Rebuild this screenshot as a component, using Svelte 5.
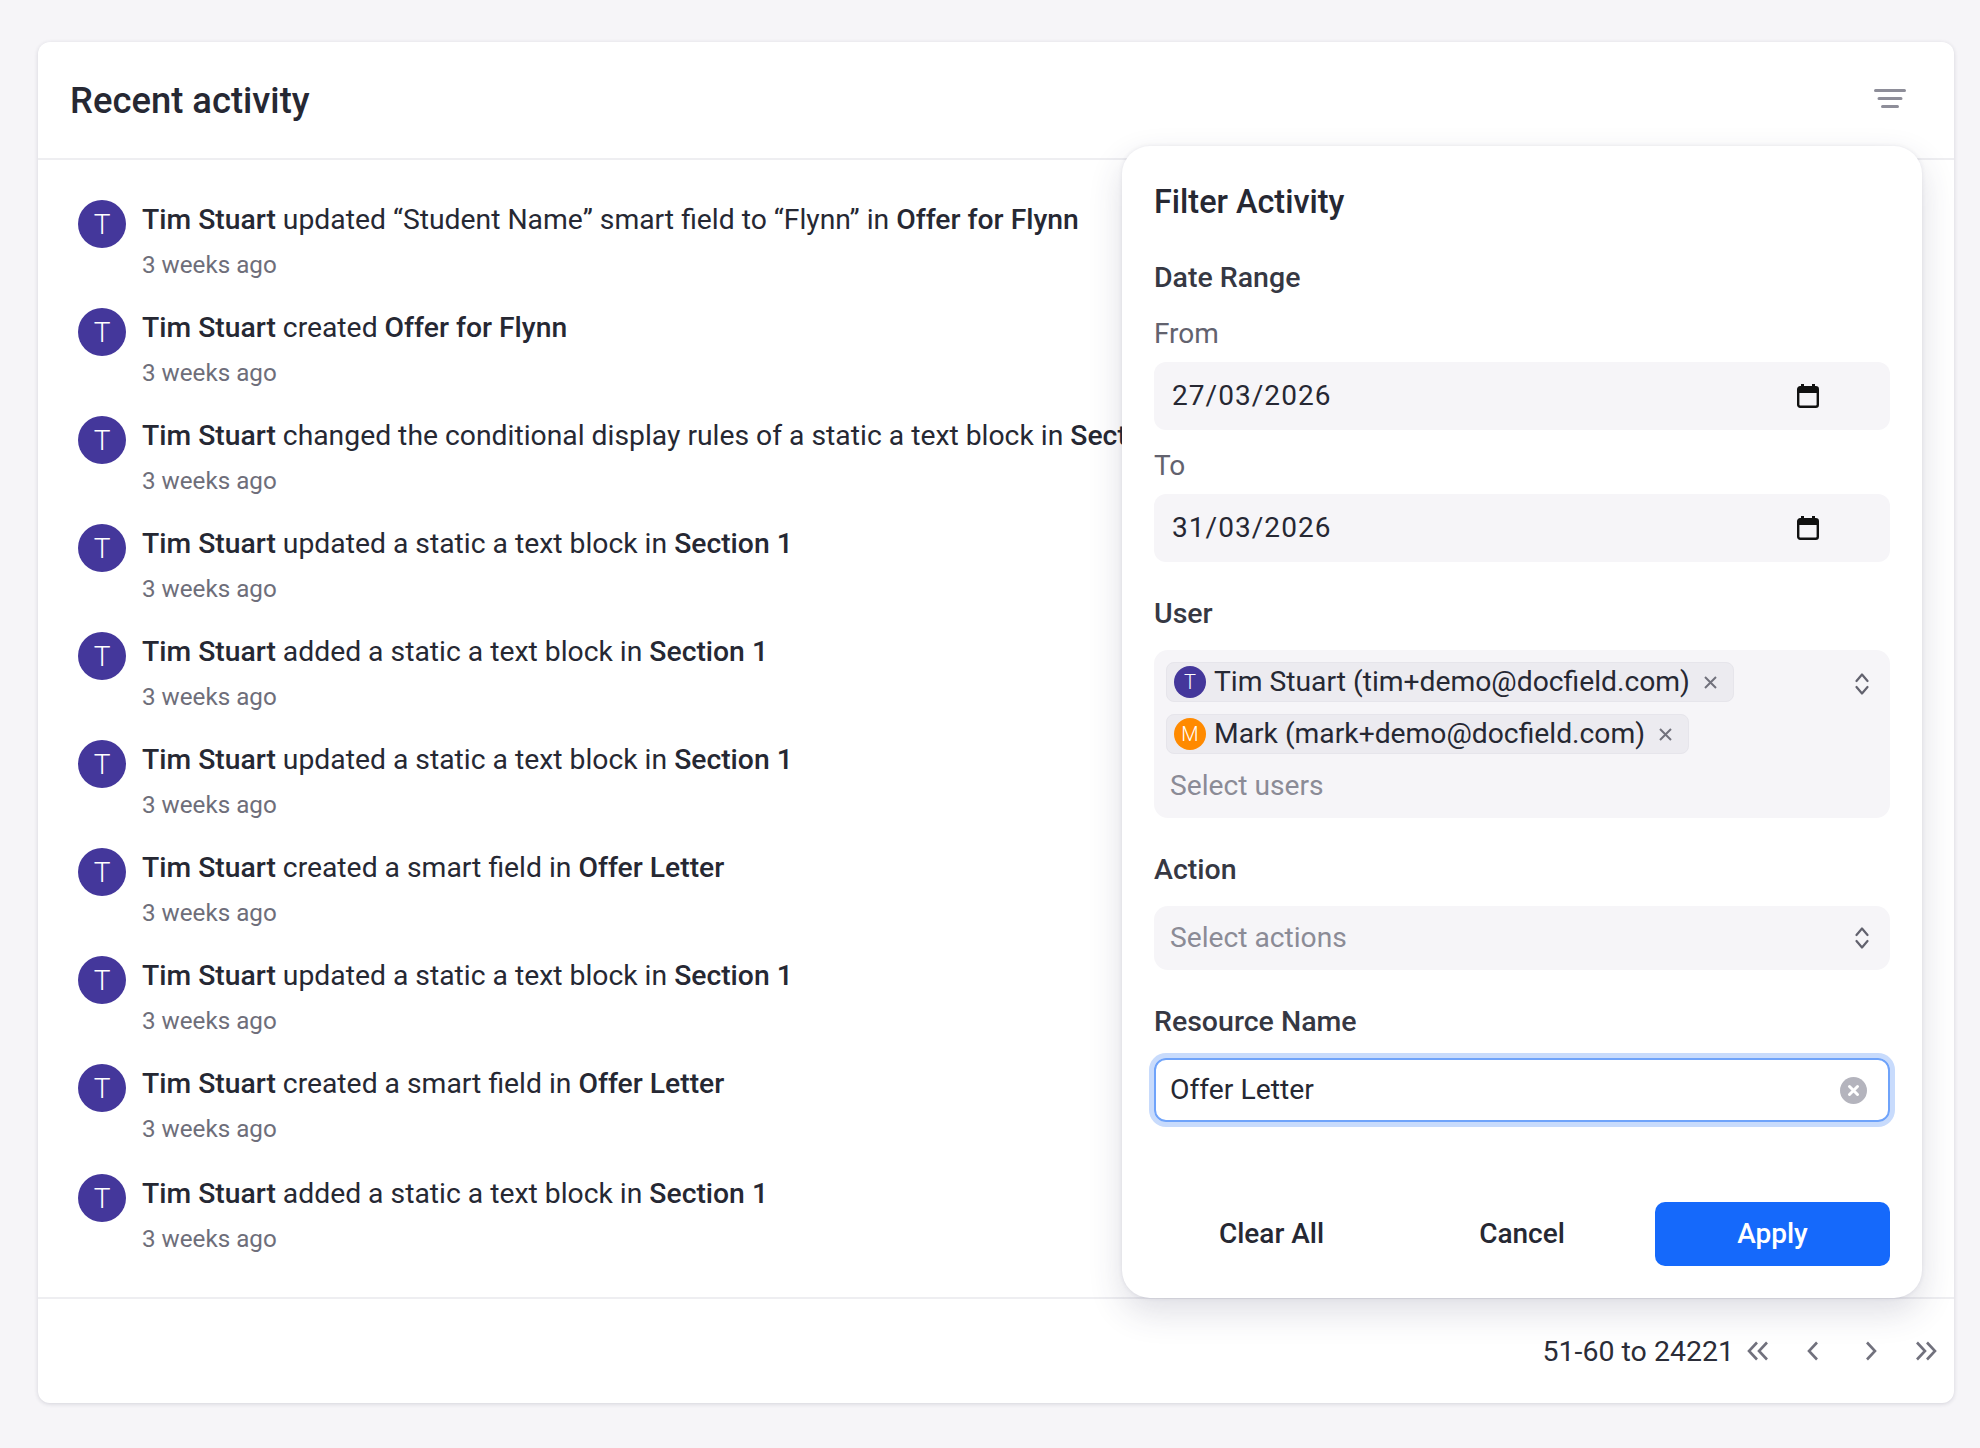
<script>
  const rows = [
    [' updated “Student Name” smart field to “Flynn” in ', 'Offer for Flynn'],
    [' created ', 'Offer for Flynn'],
    [' changed the conditional display rules of a static a text block in ', 'Section 1'],
    [' updated a static a text block in ', 'Section 1'],
    [' added a static a text block in ', 'Section 1'],
    [' updated a static a text block in ', 'Section 1'],
    [' created a smart field in ', 'Offer Letter'],
    [' updated a static a text block in ', 'Section 1'],
    [' created a smart field in ', 'Offer Letter'],
    [' added a static a text block in ', 'Section 1']
  ];
</script>

<div class="page">
  <div class="card">
    <header class="head">
      <h1>Recent activity</h1>
      <svg class="filter" width="32" height="19" viewBox="0 0 32 19" fill="none" stroke="#8e8e99" stroke-width="3" stroke-linecap="round">
        <path d="M1.5 1.5h29M5 9.5h22M8.5 17.5h15" />
      </svg>
    </header>
    <ul class="list">
      {#each rows as r}
        <li class="row">
          <span class="av">T</span>
          <div class="txt">
            <p class="line"><b>Tim Stuart</b>{r[0]}<b>{r[1]}</b></p>
            <p class="ago">3 weeks ago</p>
          </div>
        </li>
      {/each}
    </ul>
    <footer class="foot">
      <span class="count">51-60 to 24221</span>
      <svg class="pg first" width="22" height="20" viewBox="0 0 22 20" fill="none" stroke="#71717d" stroke-width="2.6"><path d="M10 1.5L2 10l8 8.5M20 1.5L12 10l8 8.5" /></svg>
      <svg class="pg prev" width="13" height="20" viewBox="0 0 13 20" fill="none" stroke="#71717d" stroke-width="2.6"><path d="M11 1.5L3 10l8 8.5" /></svg>
      <svg class="pg next" width="13" height="20" viewBox="0 0 13 20" fill="none" stroke="#71717d" stroke-width="2.6"><path d="M2 1.5L10 10l-8 8.5" /></svg>
      <svg class="pg last" width="22" height="20" viewBox="0 0 22 20" fill="none" stroke="#71717d" stroke-width="2.6"><path d="M2 1.5L10 10l-8 8.5M12 1.5l8 8.5-8 8.5" /></svg>
    </footer>

    <aside class="pop">
      <h2>Filter Activity</h2>
      <h3 class="dr">Date Range</h3>
      <div class="sub">From</div>
      <div class="date">
        <span>27/03/2026</span>
        <svg width="22" height="24" viewBox="0 0 22 24"><path d="M5.5 0v4M16.5 0v4" stroke="#111" stroke-width="3"/><rect x="1.2" y="3.2" width="19.6" height="19.6" rx="2" fill="none" stroke="#111" stroke-width="2.4"/><rect x="1" y="3" width="20" height="6" fill="#111"/></svg>
      </div>
      <div class="sub">To</div>
      <div class="date">
        <span>31/03/2026</span>
        <svg width="22" height="24" viewBox="0 0 22 24"><path d="M5.5 0v4M16.5 0v4" stroke="#111" stroke-width="3"/><rect x="1.2" y="3.2" width="19.6" height="19.6" rx="2" fill="none" stroke="#111" stroke-width="2.4"/><rect x="1" y="3" width="20" height="6" fill="#111"/></svg>
      </div>

      <h3 class="user">User</h3>
      <div class="multi">
        <div class="tags">
          <span class="tag"><span class="mini indigo">T</span>Tim Stuart (tim+demo@docfield.com)<svg class="x" width="13" height="13" viewBox="0 0 13 13" stroke="#71717c" stroke-width="2"><path d="M1 1l11 11M12 1L1 12"/></svg></span>
          <span class="tag"><span class="mini orange">M</span>Mark (mark+demo@docfield.com)<svg class="x" width="13" height="13" viewBox="0 0 13 13" stroke="#71717c" stroke-width="2"><path d="M1 1l11 11M12 1L1 12"/></svg></span>
          <span class="ph">Select users</span>
        </div>
        <svg class="updown" width="14" height="22" viewBox="0 0 14 22" fill="none" stroke="#62626e" stroke-width="2.2" stroke-linecap="round" stroke-linejoin="round"><path d="M1.5 8L7 1.5 12.5 8M1.5 14L7 20.5 12.5 14"/></svg>
      </div>

      <h3 class="action">Action</h3>
      <div class="select">
        <span class="ph">Select actions</span>
        <svg class="updown" width="14" height="22" viewBox="0 0 14 22" fill="none" stroke="#62626e" stroke-width="2.2" stroke-linecap="round" stroke-linejoin="round"><path d="M1.5 8L7 1.5 12.5 8M1.5 14L7 20.5 12.5 14"/></svg>
      </div>

      <h3 class="res">Resource Name</h3>
      <div class="input">
        <span>Offer Letter</span>
        <svg width="27" height="27" viewBox="0 0 27 27"><circle cx="13.5" cy="13.5" r="13.5" fill="#b4b4bd"/><path d="M9.5 9.5l8 8M17.5 9.5l-8 8" stroke="#fff" stroke-width="3" stroke-linecap="round"/></svg>
      </div>

      <div class="btns">
        <button class="ghost">Clear All</button>
        <button class="ghost">Cancel</button>
        <button class="apply">Apply</button>
      </div>
    </aside>
  </div>
</div>

<style>
  :global(body) { margin: 0; background: #f6f5f8; }
  .page { height: 1448px; padding: 42px 26px 0 38px; box-sizing: border-box; font-family: Roboto, sans-serif; color: #262833; }
  .card { position: relative; height: 1361px; background: #fff; border-radius: 12px; box-shadow: 0 1px 4px rgba(40,40,70,.16); display: flex; flex-direction: column; }
  .head { height: 118px; flex: none; box-sizing: border-box; border-bottom: 2px solid #eeeef1; display: flex; align-items: center; justify-content: space-between; padding: 0 48px 0 32px; }
  h1 { margin: 0; font-size: 36.4px; font-weight: 500; }
  .filter { margin-bottom: 4px; }
  .list { list-style: none; margin: 0; padding: 34px 0 0 40px; flex: 1; overflow: hidden; }
  .row { display: flex; height: 108px; gap: 16px; }
  .row:last-child { margin-top: 2px; }
  .av { flex: none; width: 48px; height: 48px; border-radius: 50%; background: #44379b; color: #fff; font-size: 28px; font-weight: 300; display: flex; align-items: center; justify-content: center; margin-top: 6px; }
  .txt { min-width: 0; white-space: nowrap; padding-top: 6px; }
  .line { margin: 0; font-size: 28.3px; line-height: 40px; }
  .line b { font-weight: 500; }
  .ago { margin: 8px 0 0; font-size: 24.2px; line-height: 34px; color: #6e6e7a; }
  .foot { height: 106px; flex: none; box-sizing: border-box; border-top: 2px solid #eeeef1; display: flex; align-items: center; justify-content: flex-end; padding: 0 17px 0 0; }
  .count { font-size: 28.5px; margin-right: 13px; color: #2b2d38; }
  .pg { flex: none; }
  .prev { margin-left: 37px; }
  .next { margin-left: 46px; }
  .last { margin-left: 37px; }

  .pop { position: absolute; left: 1084px; top: 104px; width: 800px; height: 1152px; box-sizing: border-box; padding: 34px 32px 32px; background: #fff; border-radius: 28px; box-shadow: 0 14px 34px rgba(50,50,90,.16), 0 0 4px rgba(50,50,90,.1); display: flex; flex-direction: column; }
  h2 { margin: 0; font-size: 32.4px; line-height: 44px; font-weight: 500; }
  h3 { margin: 0; font-size: 28.5px; line-height: 40px; font-weight: 500; color: #363843; }
  .dr { margin-top: 34px; }
  .sub { font-size: 28px; line-height: 40px; color: #62626e; margin-top: 16px; }
  .date { height: 68px; margin-top: 8px; box-sizing: border-box; padding: 0 71px 1px 18px; background: #f6f5f8; border-radius: 12px; display: flex; align-items: center; justify-content: space-between; font-size: 28px; letter-spacing: 1.05px; }
  .user { margin-top: 32px; }
  .multi { margin-top: 16px; background: #f6f5f8; border-radius: 14px; height: 168px; box-sizing: border-box; padding: 12px 21px 0 12px; display: flex; justify-content: space-between; }
  .tags { display: flex; flex-direction: column; align-items: flex-start; gap: 12px; }
  .tag { height: 40px; box-sizing: border-box; display: inline-flex; align-items: center; background: #ecebf0; border: 1px solid #e6e5eb; border-radius: 8px; padding: 0 16px 0 7px; font-size: 28.25px; line-height: 38px; }
  .mini { width: 32px; height: 32px; border-radius: 50%; color: #fff; font-size: 20px; font-weight: 300; display: flex; align-items: center; justify-content: center; margin-right: 8px; }
  .indigo { background: #44379b; }
  .orange { background: #ff8a00; }
  .x { margin-left: 14px; }
  .ph { font-size: 28.2px; line-height: 40px; color: #8b8b96; padding-left: 4px; }
  .multi .updown { margin-top: 11px; }
  .action { margin-top: 32px; }
  .select { margin-top: 16px; height: 64px; background: #f6f5f8; border-radius: 14px; display: flex; align-items: center; justify-content: space-between; padding: 0 21px 0 12px; }
  .res { margin-top: 32px; }
  .input { margin-top: 16px; height: 64px; box-sizing: border-box; border: 2px solid #6fa3fa; box-shadow: 0 0 0 5px #c8dbfc; border-radius: 12px; display: flex; align-items: center; justify-content: space-between; padding: 0 21px 1px 14px; font-size: 28.3px; }
  .input svg { margin-top: 1px; }
  .btns { margin-top: auto; display: grid; grid-template-columns: repeat(3, 235px); justify-content: space-between; }
  button { height: 64px; border: 0; border-radius: 10px; padding: 0 0 2px; font: 500 28px Roboto, sans-serif; background: transparent; color: #262833; }
  .apply { background: #1569fb; color: #fff; }
</style>
